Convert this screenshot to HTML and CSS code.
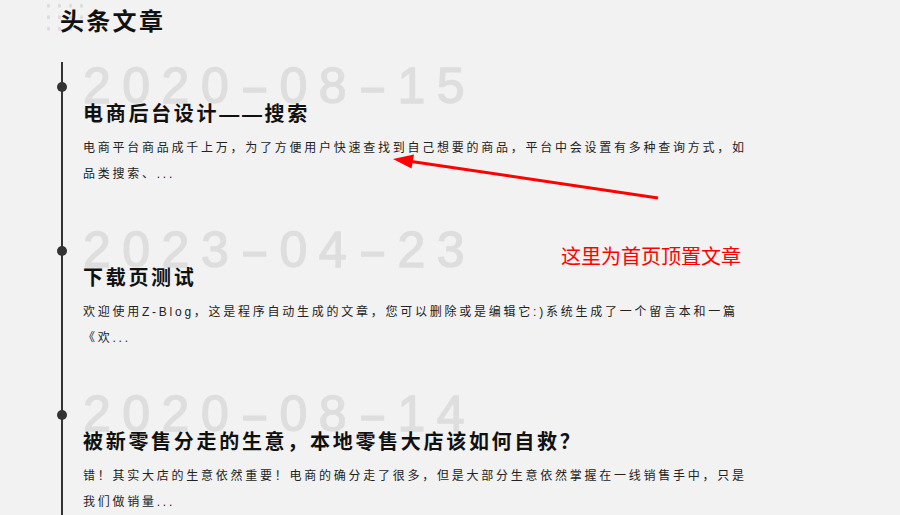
FILE: index.html
```html
<!DOCTYPE html>
<html lang="zh-CN">
<head>
<meta charset="utf-8">
<title>头条文章</title>
<link rel="stylesheet" href="styles.css">
</head>
<body>
<div class="page">
  <div class="dots"></div>
  <h2 class="heading">头条文章</h2>
  <div class="timeline">
    <div class="item">
      <span class="node"></span>
      <div class="date">2020<span class="dash">-</span>08<span class="dash">-</span>15</div>
      <h3 class="title">电商后台设计——搜索</h3>
      <p class="excerpt">电商平台商品成千上万，为了方便用户快速查找到自己想要的商品，平台中会设置有多种查询方式，如品类搜索、...</p>
    </div>
    <div class="item">
      <span class="node"></span>
      <div class="date">2023<span class="dash">-</span>04<span class="dash">-</span>23</div>
      <h3 class="title">下载页测试</h3>
      <p class="excerpt">欢迎使用Z-Blog，这是程序自动生成的文章，您可以删除或是编辑它:)系统生成了一个留言本和一篇《欢...</p>
    </div>
    <div class="item">
      <span class="node"></span>
      <div class="date">2020<span class="dash">-</span>08<span class="dash">-</span>14</div>
      <h3 class="title">被新零售分走的生意，本地零售大店该如何自救？</h3>
      <p class="excerpt">错！其实大店的生意依然重要！电商的确分走了很多，但是大部分生意依然掌握在一线销售手中，只是我们做销量...</p>
    </div>
  </div>
  <svg class="arrow" width="900" height="515" viewBox="0 0 900 515">
    <line x1="658" y1="198" x2="408" y2="161" stroke="#f00" stroke-width="3"/>
    <polygon points="393,159 414,154.5 411.5,168.5" fill="#f00"/>
  </svg>
  <div class="note">这里为首页顶置文章</div>
</div>
</body>
</html>
```

FILE: styles.css
```css
html, body {
  margin: 0;
  padding: 0;
  background: #f2f2f2;
}
body {
  font-family: "Liberation Sans", "Noto Sans CJK SC", sans-serif;
  color: #222;
  width: 900px;
  height: 515px;
  overflow: hidden;
}
.page {
  position: relative;
  padding: 0 0 0 60px;
  height: 515px;
  overflow: hidden;
}
.dots {
  position: absolute;
  left: 43px;
  top: 0;
  width: 44px;
  height: 34px;
  background-image: radial-gradient(circle, #dcdcdc 1.6px, transparent 2px);
  background-size: 11px 11.5px;
  background-position: 0 0;
}
.heading {
  position: relative;
  margin: 0;
  padding-top: 7px;
  font-size: 24px;
  line-height: 30px;
  font-weight: bold;
  letter-spacing: 2.3px;
  color: #111;
  height: 62px;
  box-sizing: border-box;
}
.timeline {
  margin-left: 1px;
  border-left: 2px solid #333;
  padding-left: 20px;
  width: 683px;
}
.item {
  position: relative;
  padding: 4px 0 39px;
}
.node {
  position: absolute;
  left: -26px;
  top: 20px;
  width: 10px;
  height: 10px;
  border-radius: 50%;
  background: #333;
}
.date {
  font-family: "Liberation Sans", sans-serif;
  font-size: 50px;
  line-height: 40px;
  height: 40px;
  font-weight: normal;
  -webkit-text-stroke: 1.4px #dedede;
  letter-spacing: 11.5px;
  color: #dedede;
  white-space: nowrap;
}
.dash {
  display: inline-block;
  width: 39.3px;
  letter-spacing: 0;
  text-align: center;
  transform: translateX(-5px) scaleX(1.7);
}
.title {
  position: relative;
  margin: -6px 0 0;
  font-size: 20px;
  line-height: 28px;
  font-weight: bold;
  letter-spacing: 2.7px;
  color: #111;
}
.excerpt {
  margin: 7px 0 0;
  width: 670px;
  font-size: 12px;
  line-height: 26px;
  letter-spacing: 2.75px;
  color: #222;
  height: 52px;
}
.arrow {
  position: absolute;
  left: 0;
  top: 0;
  pointer-events: none;
}
.note {
  position: absolute;
  left: 561px;
  top: 243px;
  font-size: 20px;
  line-height: 26px;
  color: #f00;
  font-family: "Noto Sans CJK SC", sans-serif;
}
```
